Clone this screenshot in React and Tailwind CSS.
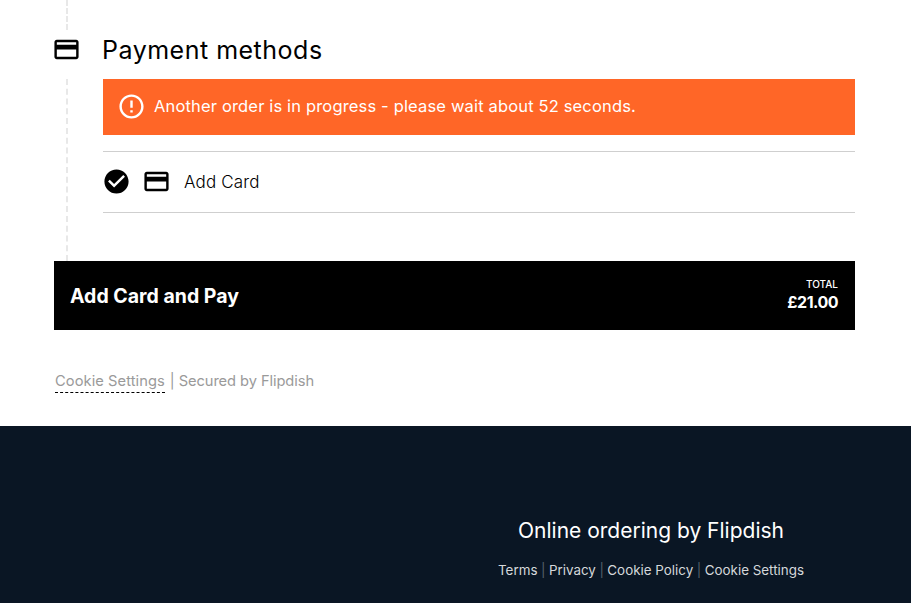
const FONT = '"Inter", "Noto Sans", sans-serif'

const CardIcon = ({ className = '' }) => (
  <svg viewBox="0 0 24 24" fill="currentColor" className={className}>
    <path d="M20 4H4c-1.11 0-1.99.89-1.99 2L2 18c0 1.11.89 2 2 2h16c1.11 0 2-.89 2-2V6c0-1.11-.89-2-2-2zm0 14H4v-6h16v6zm0-10H4V6h16v2z" />
  </svg>
)

const ErrorIcon = ({ className = '' }) => (
  <svg viewBox="0 0 24 24" fill="currentColor" className={className}>
    <path d="M11 15h2v2h-2zm0-8h2v6h-2zm.99-5C6.47 2 2 6.48 2 12s4.47 10 9.99 10C17.52 22 22 17.52 22 12S17.52 2 11.99 2zM12 20c-4.42 0-8-3.58-8-8s3.58-8 8-8 8 3.58 8 8-3.58 8-8 8z" />
  </svg>
)

const CheckIcon = ({ className = '' }) => (
  <svg viewBox="0 0 24 24" fill="currentColor" className={className}>
    <path d="M12 2C6.48 2 2 6.48 2 12s4.48 10 10 10 10-4.48 10-10S17.52 2 12 2zm-2 15l-5-5 1.41-1.41L10 14.17l7.59-7.59L19 8l-9 9z" />
  </svg>
)

const FOOTER_LINKS = ['Terms', 'Privacy', 'Cookie Policy', 'Cookie Settings']

export default function App() {
  return (
    <div className="w-[911px] h-[603px] overflow-hidden bg-white text-black" style={{ fontFamily: FONT }}>
      <div className="h-[426px] pl-[54px] pr-[56px]">
        <div className="h-[30px] ml-[12px] border-l-2 border-dashed border-[#e8e8e8]" />

        <div className="h-[49px] flex items-start">
          <div className="w-[48px] h-[40px] flex items-center shrink-0">
            <CardIcon className="w-[29px] h-[29px] -ml-[2.4px] -mt-[1px]" />
          </div>
          <h2 className="h-[40px] leading-[40px] text-[25px] font-normal tracking-[0.5px]">Payment methods</h2>
        </div>

        <div className="ml-[12px] pl-[35px] h-[182px] border-l-2 border-dashed border-[#e8e8e8]">
          <div className="h-[56px] bg-[#ff6627] text-white flex items-center pl-[14px]">
            <ErrorIcon className="w-[29px] h-[29px] shrink-0 -ml-[0.5px] -mt-[1px]" />
            <span className="ml-[8.5px] -mt-[2px] text-[16.5px] tracking-[0.16px]">Another order is in progress - please wait about 52 seconds.</span>
          </div>
          <div className="mt-[16px] h-[62px] border-y border-[#cfcfcf] flex items-center">
            <CheckIcon className="w-[29px] h-[29px] -ml-[1px] -mt-[1px] shrink-0" />
            <CardIcon className="w-[29px] h-[29px] ml-[11px] -mt-[1px] shrink-0" />
            <span className="ml-[13px] mt-[2px] text-[17px] font-light tracking-[0.15px]">Add Card</span>
          </div>
        </div>

        <div className="h-[69px] bg-black text-white flex items-center justify-between pl-[16px] pr-[17px]">
          <span className="mt-[3px] text-[19.5px] font-bold">Add Card and Pay</span>
          <div className="flex flex-col items-end">
            <span className="text-[10px] leading-[12px] font-medium">TOTAL</span>
            <span className="mt-[1px] text-[16px] leading-[22px] font-bold tracking-[-0.5px]">£21.00</span>
          </div>
        </div>

        <div className="mt-[41px] pl-[1px] text-[14.7px] leading-[21px] text-[#9a9a9a] flex items-start">
          <span className="border-b border-dashed border-black tracking-[0.06px]">Cookie Settings</span>
          <span className="ml-[5px] tracking-[-0.08px]">| Secured by Flipdish</span>
        </div>
      </div>

      <div className="h-[177px] bg-[#0a1624] text-white flex flex-col items-center pl-[391px]">
        <div className="mt-[91px] text-[21px] leading-[28px]">Online ordering by Flipdish</div>
        <div className="mt-[15px] flex items-center text-[13.4px] leading-[20px] text-[#d5d8db]">
          {FOOTER_LINKS.map((l, i) => (
            <span key={l} className="flex items-center">
              {i > 0 && <span className="mx-[3.5px] text-[#56606b]">|</span>}
              {l}
            </span>
          ))}
        </div>
      </div>
    </div>
  )
}
